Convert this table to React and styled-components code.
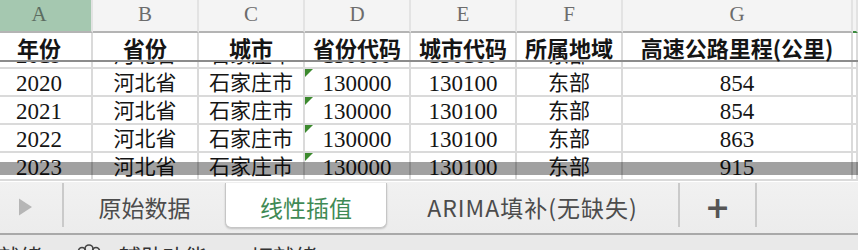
import React from "react";
import styled, { createGlobalStyle } from "styled-components";

const GlobalStyle = createGlobalStyle`
  html, body {
    margin: 0;
    padding: 0;
    background: #ffffff;
    overflow: hidden;
  }
  * {
    box-sizing: border-box;
  }
`;

const COLS = "106px 106px 106px 106px 106px 106px 230px 1fr";
const CJK = `"Noto Sans CJK SC", "Noto Sans", sans-serif`;
const SERIF = `"Liberation Serif", "Noto Sans CJK SC", serif`;

const Window = styled.div`
  width: 858px;
  height: 250px;
  overflow: hidden;
  display: flex;
  flex-direction: column;
  background: #ffffff;
`;

const Sheet = styled.div`
  flex-shrink: 0;
  display: flex;
  flex-direction: column;
  margin-left: -13px;
  width: 871px;
`;

const LetterRow = styled.div`
  display: grid;
  grid-template-columns: ${COLS};
  height: 33px;
`;

const LetterCell = styled.div`
  display: flex;
  align-items: center;
  justify-content: center;
  padding-bottom: 2px;
  background: ${(p) => (p.$active ? "#a5c8b0" : "#f4f4f4")};
  border-right: 2px solid #e3e3e3;
  border-bottom: 2px solid ${(p) => (p.$marked ? "#3b8a3e" : "#b4b4b4")};
  font-family: ${SERIF};
  font-size: 21px;
  color: ${(p) => (p.$active ? "#5c6d61" : "#6c6c6c")};
`;

const Row = styled.div`
  display: grid;
  grid-template-columns: ${COLS};
  height: ${(p) => p.$h || 28}px;
  border-bottom: 2px solid #dadada;
`;

const TitleRow = styled(Row)`
  border-bottom: 2px solid #8c8c8c;
`;

const Cell = styled.div`
  position: relative;
  display: flex;
  align-items: flex-end;
  justify-content: center;
  border-right: 2px solid #dadada;
  font-family: ${SERIF};
  font-size: ${(p) => (p.$num ? "23px" : "21px")};
  line-height: ${(p) => (p.$num ? "18px" : "21px")};
  padding-bottom: ${(p) => (p.$num ? "2px" : "1px")};
  color: #151515;
  white-space: nowrap;
`;

const TitleCell = styled(Cell)`
  align-items: center;
  padding-bottom: 0;
  font-family: ${CJK};
  font-weight: 700;
  font-size: 22px;
  line-height: 1;
`;

/* little green "number stored as text" flag */
const TextFlag = styled.span`
  position: absolute;
  top: 0;
  left: 0;
  width: 0;
  height: 0;
  border-top: 8px solid #3c8a2e;
  border-right: 8px solid transparent;
`;

const Viewport = styled.div`
  position: relative;
  height: 120px;
  overflow: hidden;
`;

const Scrolled = styled.div`
  margin-top: -19px;
`;

const ScrollShade = styled.div`
  position: absolute;
  left: 0;
  right: 0;
  top: 100px;
  height: 13px;
  background: rgba(0, 0, 0, 0.37);
`;

const TabBar = styled.div`
  flex-shrink: 0;
  display: flex;
  height: 53px;
  background: linear-gradient(#f1f1f1, #ececec);
  border-bottom: 2px solid #a9a9a9;
  font-family: ${CJK};
`;

const Tab = styled.div`
  display: flex;
  align-items: center;
  justify-content: center;
  width: ${(p) => p.$width}px;
  height: ${(p) => (p.$active ? "45px" : "44px")};
  margin-top: 1px;
  padding-top: 4px;
  padding-right: ${(p) => p.$shift || 0}px;
  font-size: 23px;
  letter-spacing: ${(p) => p.$spacing || 0}px;
  color: ${(p) => (p.$active ? "#3f8a55" : "#4c4c4c")};
  background: ${(p) => (p.$active ? "#ffffff" : "transparent")};
  border: ${(p) => (p.$active ? "1px solid #c6c6c6" : "none")};
  border-top: none;
  border-radius: ${(p) => (p.$active ? "0 0 6px 6px" : "0")};
  box-shadow: ${(p) => (p.$active ? "0 1px 2px rgba(0,0,0,0.18)" : "none")};
  border-right: ${(p) => (p.$divider ? "2px solid #cacaca" : p.$active ? "1px solid #c6c6c6" : "none")};
`;

const PlusSign = styled.span`
  font-family: "DejaVu Sans", sans-serif;
  font-size: 30px;
  font-weight: 700;
  color: #555555;
  line-height: 1;
  margin-top: 2px;
`;

const StatusBar = styled.div`
  flex: 1;
  min-height: 0;
  overflow: hidden;
  display: flex;
  align-items: flex-start;
  padding-top: 9px;
  background: #e9e9e9;
  font-family: ${CJK};
  font-size: 22px;
  color: #333333;
  line-height: 1;
  white-space: nowrap;
`;

const StatusItem = styled.span`
  display: flex;
  align-items: flex-start;
  gap: 18px;
  margin-left: ${(p) => p.$gap}px;
`;

const header = ["年份", "省份", "城市", "省份代码", "城市代码", "所属地域", "高速公路里程(公里)"];

const rows = [
  ["2019", "河北省", "石家庄市", "130000", "130100", "东部", ""],
  ["2020", "河北省", "石家庄市", "130000", "130100", "东部", "854"],
  ["2021", "河北省", "石家庄市", "130000", "130100", "东部", "854"],
  ["2022", "河北省", "石家庄市", "130000", "130100", "东部", "863"],
  ["2023", "河北省", "石家庄市", "130000", "130100", "东部", "915"],
];

const letters = ["A", "B", "C", "D", "E", "F", "G", ""];

const isNum = (v) => /^\d+$/.test(v);

const PlayIcon = () => (
  <svg width="15" height="18" viewBox="0 0 15 18">
    <path d="M1 0.5 L14 9 L1 17.5 Z" fill="#b6b6b6" />
  </svg>
);

const AccessIcon = () => (
  <svg width="24" height="20" viewBox="0 0 24 20" fill="none" stroke="#444" strokeWidth="1.6">
    <circle cx="12" cy="5" r="4" />
    <circle cx="5" cy="7" r="3.5" />
    <circle cx="19" cy="7" r="3.5" />
    <path d="M4 16 L20 16" />
  </svg>
);

export default function App() {
  return (
    <>
      <GlobalStyle />
      <Window>
        <Sheet>
          <LetterRow>
            {letters.map((l, i) => (
              <LetterCell key={i} $active={i === 0} $marked={i === 7}>
                {l}
              </LetterCell>
            ))}
          </LetterRow>
          <TitleRow $h={29}>
            {header.map((h, i) => (
              <TitleCell key={i}>{h}</TitleCell>
            ))}
            <TitleCell />
          </TitleRow>
          <Viewport>
            <Scrolled>
              {rows.map((r, ri) => (
                <Row key={ri} $h={ri === 0 ? 26 : 28}>
                  {r.map((v, ci) => (
                    <Cell key={ci} $num={isNum(v)}>
                      {ci === 3 && <TextFlag />}
                      {v}
                    </Cell>
                  ))}
                  <Cell />
                </Row>
              ))}
            </Scrolled>
            <ScrollShade />
          </Viewport>
        </Sheet>
        <TabBar>
          <Tab $width={64} $shift={12} $divider>
            <PlayIcon />
          </Tab>
          <Tab $width={161}>原始数据</Tab>
          <Tab $width={162} $active>
            线性插值
          </Tab>
          <Tab $width={293} $spacing={1} $divider>
            ARIMA填补(无缺失)
          </Tab>
          <Tab $width={77} $divider>
            <PlusSign>+</PlusSign>
          </Tab>
        </TabBar>
        <StatusBar>
          <StatusItem $gap={-2}>就绪</StatusItem>
          <StatusItem $gap={35}>
            <AccessIcon />
            <span>辅助功能：一切就绪</span>
          </StatusItem>
        </StatusBar>
      </Window>
    </>
  );
}
